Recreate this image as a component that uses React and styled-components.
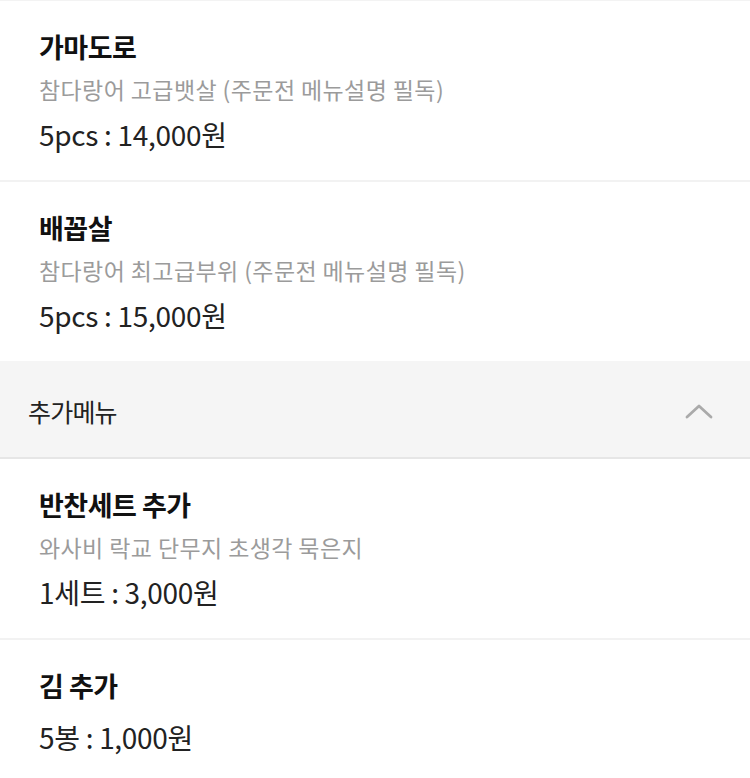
import React from "react";
import styled, { createGlobalStyle } from "styled-components";

const Global = createGlobalStyle`
  html, body { margin: 0; padding: 0; background: #fff; }
  body { font-family: "Noto Sans CJK KR", "Noto Sans", sans-serif; }
`;

const Page = styled.div`
  width: 750px;
  border-top: 1px solid #f3f3f3;
  background: #fff;
`;

const Item = styled.div`
  padding: 27px 39px 28px;
  border-bottom: ${(p) => (p.$noBorder ? "none" : "2px solid #f2f2f2")};
  display: flex;
  flex-direction: column;
`;

const Title = styled.div`
  font-size: 27px;
  font-weight: 700;
  color: #111;
  line-height: 38px;
  letter-spacing: -0.5px;
`;

const Desc = styled.div`
  margin-top: 8px;
  font-size: 23px;
  color: #9b9b9b;
  line-height: 30px;
  letter-spacing: 0.4px;
`;

const Price = styled.div`
  margin-top: ${(p) => (p.$afterDesc ? "12px" : "14px")};
  font-size: 28px;
  color: #222;
  line-height: 36px;
  letter-spacing: -0.3px;
`;

const Header = styled.div`
  height: 98px;
  box-sizing: border-box;
  background: #f5f5f5;
  border-bottom: 2px solid #e6e6e6;
  display: flex;
  align-items: center;
  justify-content: space-between;
  padding: 4px 37px 0 28px;
`;

const HeaderText = styled.div`
  font-size: 25px;
  color: #222;
  letter-spacing: -0.8px;
`;

const Chevron = () => (
  <svg width="28" height="16" viewBox="0 0 28 16" fill="none">
    <path d="M2 14 L14 3 L26 14" stroke="#aaaaaa" strokeWidth="2.8" strokeLinecap="round" strokeLinejoin="round" />
  </svg>
);

const MenuItem = ({ title, desc, price, noBorder }) => (
  <Item $noBorder={noBorder}>
    <Title>{title}</Title>
    {desc && <Desc>{desc}</Desc>}
    <Price $afterDesc={!!desc}>{price}</Price>
  </Item>
);

export default function App() {
  return (
    <Page>
      <Global />
      <MenuItem title="가마도로" desc="참다랑어 고급뱃살 (주문전 메뉴설명 필독)" price="5pcs : 14,000원" />
      <MenuItem title="배꼽살" desc="참다랑어 최고급부위 (주문전 메뉴설명 필독)" price="5pcs : 15,000원" noBorder />
      <Header>
        <HeaderText>추가메뉴</HeaderText>
        <Chevron />
      </Header>
      <MenuItem title="반찬세트 추가" desc="와사비 락교 단무지 초생각 묵은지" price="1세트 : 3,000원" />
      <MenuItem title="김 추가" price="5봉 : 1,000원" noBorder />
    </Page>
  );
}
